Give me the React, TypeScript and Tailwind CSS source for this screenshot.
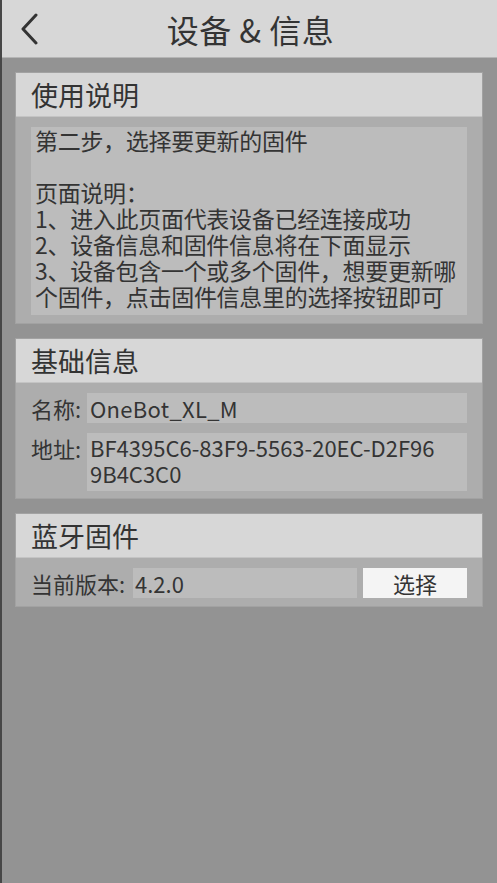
const FONT = { fontFamily: '"Noto Sans CJK SC", "Noto Sans", sans-serif' };

function Section({ title, children }: { title: string; children: React.ReactNode }) {
  return (
    <div className="bg-[#adadad] shadow-[0_0_0_1px_#a2a2a2]">
      <div className="h-[44px] bg-[#d7d7d7] border-b border-[#c4c4c4] px-[15px] flex items-center text-[27px] leading-none text-[#333]">
        {title}
      </div>
      {children}
    </div>
  );
}

export default function App() {
  return (
    <div style={FONT} className="w-[497px] h-[883px] bg-[#939393] border-l-2 border-[#474747] flex flex-col text-[#343434]">
      {/* Header */}
      <div className="h-[58px] shrink-0 bg-[#d7d7d7] border-b border-[#b5b5b5] relative flex items-center justify-center">
        <svg className="absolute left-[17px] top-[13px]" width="22" height="32" viewBox="0 0 22 32" fill="none">
          <path d="M17 2 L4 16 L17 30" stroke="#333" strokeWidth="3" strokeLinecap="round" strokeLinejoin="round" />
        </svg>
        <span className="text-[32px] leading-none tracking-[0.5px] pl-[2px]">设备 &amp; 信息</span>
      </div>

      <div className="flex flex-col gap-[16px] pt-[15px] pl-[14px] pr-[15px]">
        {/* 使用说明 */}
        <Section title="使用说明">
          <div className="pt-[10px] pb-[8px] px-[15px]">
            <div className="bg-[#bcbcbc] px-[4px] pt-0 pb-[6px] text-[23px] leading-[26px] tracking-[-0.3px]">
              <div>第二步，选择要更新的固件</div>
              <div>&nbsp;</div>
              <div>页面说明：</div>
              <div>1、进入此页面代表设备已经连接成功</div>
              <div>2、设备信息和固件信息将在下面显示</div>
              <div>3、设备包含一个或多个固件，想要更新哪</div>
              <div>个固件，点击固件信息里的选择按钮即可</div>
            </div>
          </div>
        </Section>

        {/* 基础信息 */}
        <Section title="基础信息">
          <div className="pt-[10px] pb-[7px] px-[15px] flex flex-col gap-[10px] text-[22px]">
            <div className="flex items-start">
              <span className="w-[56px] shrink-0 leading-[30px]">名称:</span>
              <div className="flex-1 bg-[#bcbcbc] h-[30px] px-[3px] leading-[30px] tracking-[0.3px]">OneBot_XL_M</div>
            </div>
            <div className="flex items-start">
              <span className="w-[56px] shrink-0 leading-[30px]">地址:</span>
              <div className="flex-1 bg-[#bcbcbc] px-[3px] pt-[1px] pb-[5px] leading-[26px]">
                <div>BF4395C6-83F9-5563-20EC-D2F96</div>
                <div>9B4C3C0</div>
              </div>
            </div>
          </div>
        </Section>

        {/* 蓝牙固件 */}
        <Section title="蓝牙固件">
          <div className="pt-[10px] pb-[8px] px-[15px] flex items-center text-[22px]">
            <span className="w-[102px] shrink-0 leading-[30px]">当前版本:</span>
            <div className="w-[224px] bg-[#bcbcbc] h-[30px] px-[2px] leading-[30px]">4.2.0</div>
            <button className="ml-[6px] flex-1 h-[30px] bg-[#f4f4f4] leading-[30px] text-center">选择</button>
          </div>
        </Section>
      </div>
    </div>
  );
}
